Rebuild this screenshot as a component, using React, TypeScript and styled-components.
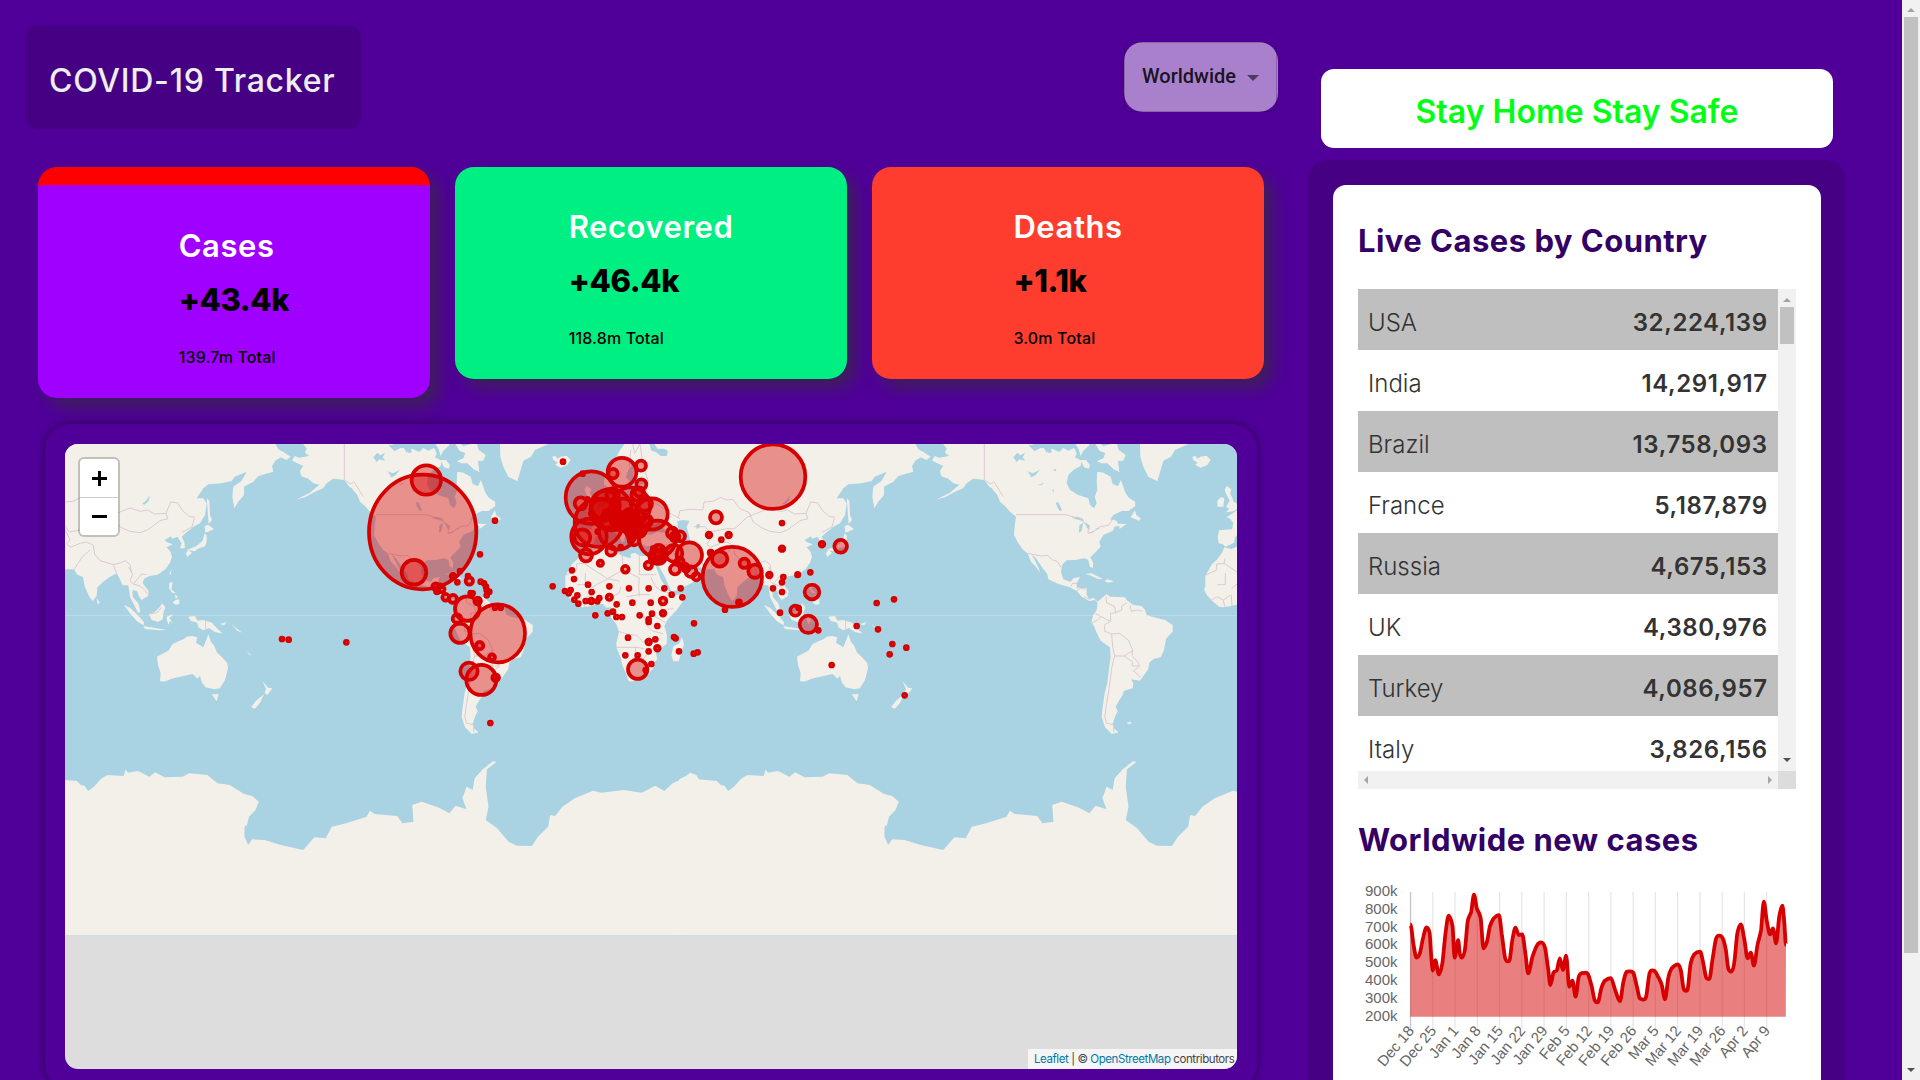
import React from "react";
import styled, { createGlobalStyle } from "styled-components";

const GlobalStyle = createGlobalStyle`
  * { box-sizing: border-box; }
  body {
    margin: 0;
    background: #500099;
    overflow: hidden;
    font-family: Inter, "Liberation Sans", sans-serif;
  }
  h1, h2, h3, p { margin: 0; }
`;

const Page = styled.div`
  display: flex;
  width: 1920px;
  height: 1080px;
  overflow: hidden;
  background: #500099;
`;

const Main = styled.main`
  width: 1308px;
  flex: none;
  padding: 25px 0 0 25px;
`;

const Header = styled.header`
  display: flex;
  justify-content: space-between;
  align-items: flex-start;
  width: 1253px;
  height: 142px;
`;

const Brand = styled.div`
  width: 336px;
  height: 104px;
  border-radius: 13px;
  background: #450084;
  padding: 35px 0 0 24px;
`;

const BrandName = styled.h1`
  font-size: 32px;
  line-height: 42px;
  font-weight: 500;
  letter-spacing: 0.75px;
  color: #eee;
  white-space: nowrap;
`;

const Select = styled.div`
  display: flex;
  margin-top: 17px;
  width: 154px;
  height: 70px;
  padding-right: 1px;
  border-radius: 19px;
  background: rgba(255, 255, 255, 0.5);
`;

const SelectOutline = styled.div`
  display: flex;
  align-items: center;
  justify-content: space-between;
  flex: 1;
  padding: 0 17px 3px 17px;
  border: 1px solid rgba(0, 0, 0, 0.2);
  border-radius: 5px;
  font: 500 20px Roboto, sans-serif;
  letter-spacing: 0;
  color: rgba(0, 0, 0, 0.87);
`;

const Caret = styled.span`
  margin-top: 5px;
  border: 6.5px solid transparent;
  border-top: 6.5px solid rgba(0, 0, 0, 0.54);
  border-bottom: 0;
`;

const Stats = styled.section`
  display: flex;
  align-items: flex-start;
  gap: 25px;
  height: 257px;
  padding-left: 13px;
`;

const StatCard = styled.article<{ $color: string; $active?: boolean }>`
  display: flex;
  justify-content: center;
  width: 392px;
  height: ${(p) => (p.$active ? 231 : 212)}px;
  padding-top: ${(p) => (p.$active ? 41 : 40)}px;
  border-radius: 19px;
  border-top: ${(p) => (p.$active ? "18.5px solid #ff0000" : "0")};
  background: ${(p) => p.$color};
  box-shadow: 9px 9px 16px rgba(50, 50, 50, 0.62);
`;

const StatBody = styled.div`
  white-space: nowrap;
`;

const StatTitle = styled.h2`
  font-size: 31px;
  line-height: 40px;
  font-weight: 600;
  letter-spacing: 0.55px;
  color: #fff;
`;

const StatValue = styled.h2`
  margin-top: 14px;
  font-size: 31px;
  line-height: 40px;
  font-weight: 800;
  letter-spacing: -0.4px;
  color: #000;
`;

const StatTotal = styled.p`
  margin-top: 26px;
  font-size: 16px;
  line-height: 22px;
  font-weight: 500;
  letter-spacing: 0.15px;
  color: #000;
`;

const MapCard = styled.section`
  margin-left: 20px;
  width: 1212px;
  height: 665px;
  padding: 20px;
  border-radius: 25px;
  background: #500099;
  box-shadow: 0 0 9px rgba(0, 0, 0, 0.5);
`;

const MapFrame = styled.div`
  position: relative;
  width: 1172px;
  height: 625px;
  overflow: hidden;
  border-radius: 13px;
  background: #ddd;

  svg { display: block; }
`;

const ZoomControl = styled.div`
  position: absolute;
  top: 13px;
  left: 13px;
  width: 42px;
  border: 2.5px solid rgba(0, 0, 0, 0.2);
  border-radius: 6px;
  background: #fff;
  background-clip: padding-box;
`;

const ZoomButton = styled.button`
  display: flex;
  align-items: center;
  justify-content: center;
  width: 100%;
  height: 38px;
  padding: 0;
  border: 0;
  background: transparent;

  & + & { border-top: 1px solid #ccc; }
`;

const Attribution = styled.div`
  position: absolute;
  right: 0;
  bottom: 0;
  width: 209px;
  height: 20px;
  padding-left: 6px;
  background: rgba(255, 255, 255, 0.7);
  font-size: 11.5px;
  line-height: 21px;
  letter-spacing: -0.42px;
  white-space: nowrap;
  color: #444;

  a { color: #0078a8; text-decoration: none; }
`;

const Aside = styled.aside`
  width: 594px;
  flex: none;
`;

const Slogan = styled.div`
  width: 512px;
  height: 79px;
  margin: 69px 0 12px 13px;
  border-radius: 13px;
  background: #fff;
  text-align: center;
  font-size: 32px;
  line-height: 86px;
  font-weight: 600;
  color: #00ff14;
  white-space: nowrap;
`;

const SidePanel = styled.div`
  width: 538px;
  height: 960px;
  padding: 25px;
  border-radius: 20px;
  background: #450084;
`;

const SideCard = styled.div`
  height: 930px;
  padding: 34px 25px 0;
  border-radius: 13px;
  background: #fff;
`;

const SideTitle = styled.h3`
  height: 44px;
  font-size: 31px;
  line-height: 44px;
  font-weight: 700;
  letter-spacing: 0.47px;
  color: #330066;
  white-space: nowrap;
`;

const TableFrame = styled.div`
  display: grid;
  grid-template-columns: 420px 18px;
  grid-template-rows: 482px 18px;
  margin: 26px 0 29px;
`;

const Rows = styled.div`
  overflow: hidden;
`;

const Row = styled.div`
  display: flex;
  align-items: center;
  justify-content: space-between;
  height: 61px;
  padding: 5px 11px 0 10px;
  font-size: 24px;
  font-weight: 300;
  color: #333;

  &:nth-child(odd) { background: #bfbfbf; }

  strong { font-weight: 600; letter-spacing: 0.6px; margin-right: -0.6px; }
`;

const Track = styled.div<{ $horizontal?: boolean }>`
  display: flex;
  flex-direction: ${(p) => (p.$horizontal ? "row" : "column")};
  align-items: center;
  justify-content: space-between;
  padding: ${(p) => (p.$horizontal ? "0 6px" : "9px 0")};
  background: #f1f1f1;
`;

const Thumb = styled.div<{ $length: number }>`
  width: 14px;
  height: ${(p) => p.$length}px;
  margin: 5px 0 auto;
  background: #c1c1c1;
`;

const Corner = styled.div`
  background: #dcdcdc;
`;

const Arrow = styled.span<{ $dir: "up" | "down" | "left" | "right"; $muted?: boolean }>`
  width: 0;
  height: 0;
  border: 4px solid transparent;
  border-${(p) => ({ up: "bottom", down: "top", left: "right", right: "left" })[p.$dir]}-color: ${(p) =>
    p.$muted ? "#a3a3a3" : "#505050"};
  border-${(p) => ({ up: "top", down: "bottom", left: "left", right: "right" })[p.$dir]}-width: 0;
`;

const PageScroll = styled(Track)`
  width: 18px;
  height: 1080px;
  flex: none;
  padding-top: 8px;
  padding-bottom: 8px;
`;

/* ---------- World map ---------- */

/* Outlines are kept in thirds of a pixel, each set around its own origin. */
const AMERICAS = [
  "-60,60 -40,85 -45,98 -32,108 -62,113 -76,108 -84,122 -50,138 -60,152 -57,168 -35,176 -20,190 -2,194 -30,218 -70,238 -45,232 -12,214 10,204 20,190 40,176 73,180 88,200 95,205 112,225 120,245 135,258 150,275 168,290 165,310 162,345 175,370 190,390 203,400 213,425 228,440 240,458 236,444 224,420 216,404 228,415 245,440 262,463 265,478 295,492 325,500 350,512 365,530 388,543 405,540 413,548 410,570 400,585 394,607 402,618 410,638 422,662 450,682 452,710 448,740 442,790 434,820 428,860 425,890 435,922 455,942 475,937 462,925 458,912 465,890 473,874 467,860 475,845 488,825 492,812 518,805 520,790 513,778 540,782 565,747 568,728 582,716 602,712 612,690 618,656 638,635 638,615 615,600 575,590 560,585 555,570 545,558 520,555 500,540 495,532 450,530 440,522 425,535 413,545 400,533 388,538 380,525 380,505 350,503 350,490 360,470 340,475 332,486 310,478 303,455 306,435 320,421 345,420 373,415 385,420 390,440 398,445 400,430 391,412 405,398 422,380 418,365 430,345 458,333 464,320 478,317 478,327 500,312 475,311 465,298 450,299 460,285 485,273 505,273 526,258 525,245 505,232 495,215 488,195 482,180 474,198 458,192 452,170 430,158 412,155 410,185 412,210 404,230 410,250 402,265 390,255 385,235 355,225 330,210 320,190 325,165 340,150 362,138 365,122 345,112 350,100 342,84 325,92 310,84 298,96 276,86 260,98 252,84 225,82 210,60",
  "400,60 430,78 470,68 476,90 497,105 490,122 474,124 478,156 460,147 442,130 425,130 410,124 430,115 436,100 418,92",
  "340,60 380,60 388,76 370,92 362,108 356,88",
  "540,60 541,110 550,140 565,170 592,184 602,150 610,122 633,110 645,90 690,70",
  "697,110 706,108 712,116 722,110 740,107 752,120 742,135 722,143 705,134 713,128 700,120",
  "362,120 378,120 390,136 386,146 372,142",
  "512,292 525,270 528,284 543,296 536,302 525,297",
  "375,462 395,460 430,478 412,476 390,466",
  "433,484 442,478 462,484 446,488",
  "500,909 510,905 516,909 506,913",
];

const AMERICAS_WATER = [
  "160,112 172,98 180,106 195,98 188,112 196,122 178,118 170,126",
  "203,154 218,160 240,150 226,166 214,172",
  "287,246 296,248 306,270 300,274 292,262",
  "334,293 352,290 368,296 372,304 356,300",
  "358,316 370,308 364,334 357,338",
  "374,305 390,318 388,330 380,322",
  "382,341 402,332 398,338",
  "402,328 418,323 416,328",
  "232,196 252,188 246,194",
  "205,76 222,74 250,80 236,86 224,94 214,84",
  "262,96 272,88 276,96 268,100",
  "278,150 290,146 286,154",
  "276,206 282,210 280,218",
];

const AMERICAS_BORDERS = [
  "73,60 73,180 92,192 102,186 130,230",
  "168,284 318,284 345,292 365,300 385,322 384,340 402,334 420,320 445,316 458,298 468,300",
  "203,400 222,404 245,408 262,406 278,420 292,424 303,442",
  "332,500 338,490 352,490 M350,512 362,505 378,508 M388,538 372,530",
  "438,530 440,548 464,560 467,578 452,580 452,604 434,614 434,634 455,642 478,640 505,660 518,690 516,706 536,730 538,740 520,752 542,772",
  "467,578 486,570 484,560 500,548 M510,556 514,574 532,570 546,574",
  "395,610 412,600 424,590 452,604 M404,580 424,590",
  "455,642 458,680 464,708 492,708 518,692 M464,708 456,740 448,800 440,850 434,890 440,910 460,914 462,938",
  "492,708 518,726 516,738 536,738",
];

const OLD_WORLD = [
  "262,30 240,60 225,90 200,118 192,135 192,164 208,174 221,161 228,178 232,194 240,200 250,190 262,165 268,152 257,142 266,118 277,103 290,90 300,92 298,98 281,118 280,138 284,154 300,156 325,154 310,162 294,166 290,178 280,184 272,207 250,208 229,212 216,204 218,178 208,186 210,212 198,220 186,230 172,240 156,251 141,261 152,268 160,279 156,298 117,301 113,320 116,340 128,342 136,350 150,344 162,338 165,323 180,305 202,298 216,298 228,312 242,326 245,338 254,332 252,324 264,323 248,308 236,294 236,284 252,298 266,309 272,328 282,344 292,338 286,322 309,316 302,330 306,342 318,348 338,348 357,347 354,362 349,379 346,380 330,379 298,377 285,368 272,372 272,385 250,379 232,370 222,366 222,352 218,343 192,344 170,350 154,357 133,352 126,368 112,388 96,402 86,420 76,438 76,470 72,478 80,494 94,510 117,530 128,532 154,528 176,522 189,522 199,533 213,532 218,545 213,562 229,583 237,605 229,640 230,655 242,682 247,706 259,732 264,751 272,755 298,749 320,738 340,714 341,700 352,688 348,670 360,656 380,642 381,616 373,588 384,567 410,540 428,515 437,491 400,495 394,489 382,478 373,465 362,447 352,420 338,390 346,384 350,396 356,408 372,436 384,462 395,485 420,478 442,466 469,452 484,432 474,422 464,412 454,424 440,424 432,406 421,388 428,388 440,402 454,408 469,406 493,418 522,418 532,434 549,441 554,469 568,500 578,513 590,498 592,472 610,455 629,441 650,430 658,444 668,466 685,466 690,500 704,528 714,548 721,546 716,522 698,500 698,480 712,484 716,498 725,510 744,498 746,484 728,460 732,446 748,438 773,434 796,418 810,398 816,381 812,366 800,352 818,343 800,336 794,330 813,319 816,326 832,320 845,340 840,355 855,355 853,335 845,320 858,308 880,290 900,280 915,255 920,220 910,205 890,205 910,175 925,163 965,160 995,153 1004,140 1040,125 1025,152 1000,170 997,200 1003,235 1015,215 1032,195 1032,170 1060,155 1075,138 1120,125 1116,108 1126,92 1142,82 1160,90 1172,80 1150,66 1135,58 1120,30",
  "138,247 160,244 170,238 173,223 160,214 157,203 150,190 154,178 140,168 134,180 140,195 149,212 138,230 148,236",
  "112,230 130,230 133,204 122,202 112,212",
  "426,621 432,643 416,694 400,694 394,676 400,649 418,640",
];

const OLD_WORLD_WATER = [
  "314,309 316,294 330,279 344,284 362,272 362,287 386,309 352,306 330,315",
  "412,274 428,270 448,272 440,292 446,312 453,343 429,340 426,316 414,294",
  "328,42 342,40 352,56 372,56 384,62 380,78 362,78 348,66 334,62",
  "468,284 480,282 478,294 470,296",
  "726,222 738,212 750,196 746,212 734,224",
  "540,262 560,258 548,264",
];

const OLD_WORLD_BORDERS = [
  "415,262 420,242 450,238 488,240 492,216 520,214 542,202 560,210 578,208 600,236 628,248 634,258 620,262 600,282 584,296 560,296 530,302 508,306 496,290 462,290",
  "634,256 660,246 690,234 722,244 742,240 764,252 798,250 804,266 780,272 764,284 742,300 720,308 690,304 666,294 640,276 628,250",
  "798,250 812,216 832,218 848,242 866,258 884,262 876,290 860,300 846,306",
  "496,300 510,330 500,342 512,352 540,340 560,336 580,346 584,372 600,392 640,404 662,398 676,392 690,404 694,428",
  "493,418 486,394 476,360 M522,418 534,400 548,380 570,360 M640,404 650,430",
  "686,412 698,432 690,452 700,462 712,448 724,432 740,434 M700,462 720,468 732,478 742,490",
  "135,385 132,400 110,402 110,420 76,436 M132,400 202,446 250,420 246,372 M298,378 298,434 348,434",
  "202,446 240,454 M250,420 298,444 296,470 M136,430 136,464 112,464 M155,474 172,462 202,448",
  "206,520 216,500 238,490 242,470 M260,500 300,494 330,494 M296,470 298,498 M332,440 346,470 366,484 396,490",
  "234,604 262,612 290,616 310,636 332,618 M228,652 290,652 312,656 M288,652 282,690 308,688 326,668",
  "310,556 320,586 336,602 370,612 M340,556 376,578 M354,500 366,540 400,536",
  "130,510 134,530 M154,494 156,528 M176,496 178,522 M94,510 112,500 130,510 150,496",
  "248,249 272,252 300,240 325,232 M272,60 268,110 M300,42 310,110 325,154 M325,154 318,186 340,214 390,250 420,266",
  "300,42 284,70 278,42",
  "357,347 390,344 410,348 M400,370 422,386 M410,348 414,330",
];

const PACIFIC = [
  "438,400 444,390 456,398 442,411",
  "440,390 470,378 488,362 494,340 500,346 500,366 494,380 478,384 464,394",
  "494,318 504,314 522,327 508,334 496,338",
  "500,235 508,242 510,285 516,300 506,312 503,272",
  "388,462 395,446 392,464",
  "388,488 398,486 394,508 408,520 396,518 387,504",
  "398,548 406,540 418,538 418,552 408,554",
  "404,524 414,530 408,536",
  "327,582 345,576 360,560 366,550 376,562 370,578 368,598 355,606 335,600",
  "252,555 270,563 292,584 312,606 310,616 290,603 270,580",
  "310,618 345,624 380,630 360,631 315,627",
  "380,590 402,582 388,594 400,612 390,602 386,614 381,602",
  "445,590 465,588 472,602 490,600 516,608 530,624 548,641 525,636 507,624 490,631 475,622 472,608 452,602",
  "351,710 385,692 398,672 415,664 430,658 440,650 456,648 472,652 468,668 490,682 498,662 505,643 512,664 523,678 530,696 546,712 562,730 564,745 555,780 540,805 522,808 497,802 486,788 480,768 472,776 458,762 430,768 395,776 372,785 360,783 362,760 354,735",
  "515,823 536,822 530,844",
  "668,785 678,795 684,803 697,805 682,825 674,820 678,806",
  "672,823 660,848 645,866 633,862 648,842",
  "170,535 180,548 173,553",
  "540,612 560,606 552,616",
  "574,612 606,638 592,632",
  "620,694 634,706 628,704",
];

const ANTARCTICA =
  "-2,178 14,168 25,158 40,165 46,178 90,183 100,195 110,198 118,213 132,200 150,176 165,165 205,168 210,148 215,158 240,153 268,170 282,157 305,172 350,170 365,160 410,165 435,190 465,195 500,222 520,228 536,245 528,270 512,290 507,315 501,320 501,350 510,375 520,358 550,360 590,375 645,390 672,352 700,355 715,320 750,310 800,290 808,272 820,282 875,288 888,310 915,305 912,255 935,245 975,262 1003,280 1018,257 1045,268 1035,235 1045,200 1060,210 1065,175 1085,148 1110,124 1118,126 1095,148 1092,200 1099,260 1092,300 1120,325 1148,365 1168,377 1205,378 1220,350 1245,320 1250,285 1262,288 1280,260 1310,235 1355,212 1375,218 1430,210 1475,218 1507,197 1530,213 1550,190 1572,178 1572,646 -2,646";

type Marker = [number, number, number?, number?];

const AMERICA_MARKERS: Marker[] = [
  [248, 306, 161, 172], [473, 610, 82, 87], [259, 150, 44], [222, 427, 37], [424, 750, 45], [387, 724, 26],
  [360, 610, 29], [382, 536, 37], [351, 566, 13], [419, 647, 11], [456, 682, 9], [467, 743, 10], [413, 513, 10],
  [465, 533], [482, 533], [339, 507, 12], [317, 502, 10], [287, 470, 10], [291, 484, 6], [305, 478, 9],
  [339, 439, 7], [360, 423], [352, 457], [388, 453, 11], [384, 438], [422, 455], [432, 460], [438, 470],
  [440, 480], [448, 485], [440, 496], [398, 490], [392, 489], [465, 272], [420, 373], [451, 879], [19, 637],
  [-174, 627], [-154, 629], [638, 469], [300, 468, 5],
];

const WORLD_MARKERS: Marker[] = [
  [69, 95], [154, 203, 77, 79], [246, 127, 43], [219, 131, 14], [303, 107, 15], [128, 131], [122, 220, 18],
  [304, 163, 15], [298, 186, 14], [293, 194, 19], [147, 320, 53], [127, 322, 24], [176, 279, 72], [213, 239, 62],
  [233, 303, 56], [272, 230, 58], [336, 252, 47], [352, 327, 55], [248, 249, 43], [196, 226, 43], [186, 240, 34],
  [208, 272, 26], [236, 269, 25], [272, 272, 28], [298, 279, 32], [277, 294, 25], [298, 302, 19], [269, 257, 20],
  [282, 330, 16], [248, 286, 17], [245, 279, 15], [261, 294, 13], [272, 316, 11], [282, 310, 11], [320, 272, 16],
  [314, 221, 22], [218, 194, 19], [268, 306, 9], [277, 305, 10], [341, 357, 6], [350, 379, 22], [353, 376, 14],
  [356, 364, 19], [357, 382, 20], [368, 362, 6], [402, 370, 25], [448, 375, 38], [397, 309, 16], [405, 321, 13],
  [420, 319, 15], [419, 395, 12], [405, 418, 15], [434, 410, 10], [438, 415, 10], [453, 425, 16], [469, 440, 11],
  [325, 406, 11], [138, 376, 18], [181, 400, 8], [213, 363, 14], [256, 418, 10], [242, 351], [173, 305], [198, 249, 8],
  [204, 296], [216, 270], [231, 295], [154, 251], [142, 208], [137, 345],
  [539, 387, 23], [512, 368, 6], [577, 441, 89, 90], [613, 400, 14], [645, 424, 20], [597, 517, 6], [555, 539],
  [528, 262, 18], [507, 315, 7], [566, 315, 7], [544, 329], [726, 356, 7], [726, 279], [846, 343, 7],
  [699, 140, 97], [688, 435, 7], [730, 441], [699, 475], [726, 457], [726, 486], [773, 434, 5], [811, 427],
  [816, 486, 22], [766, 542, 15], [776, 534], [805, 583, 26], [835, 601], [720, 548], [875, 705], [902, 349, 19],
  [950, 588], [1014, 598], [1057, 642], [1099, 653], [1049, 673], [1010, 519], [1062, 508], [1094, 796],
  [96, 421], [102, 447], [144, 464], [208, 469], [267, 475], [326, 475], [373, 475], [422, 475], [395, 494],
  [427, 502], [75, 483], [92, 480], [86, 490], [112, 496], [103, 509], [115, 521], [137, 513], [154, 513, 7],
  [155, 486], [172, 514], [178, 504], [208, 502, 8], [230, 523], [277, 518], [332, 518], [369, 513, 10],
  [369, 550, 7], [336, 551], [299, 556], [166, 556], [203, 550], [219, 545], [229, 561], [246, 561], [326, 568],
  [326, 576], [352, 588], [462, 580], [264, 623], [326, 636, 7], [346, 628], [352, 655, 7], [326, 664],
  [402, 621], [407, 625], [417, 664], [461, 671], [473, 667], [256, 676], [293, 676], [334, 702], [317, 720],
  [293, 718, 29],
];

const Shapes = ({ list, fill }: { list: string[]; fill: string }) => (
  <>
    {list.map((points) => (
      <polygon key={points} points={points} fill={fill} />
    ))}
  </>
);

const Borders = ({ list }: { list: string[] }) => (
  <path d={list.map((l) => "M" + l).join(" ")} fill="none" stroke="#d9c6d1" strokeWidth="2.8" />
);

const Markers = ({ list }: { list: Marker[] }) => (
  <g fill="#d60000" fillOpacity="0.4" stroke="#d60000" strokeWidth="11.25">
    {list.map(([x, y, rx = 4.4, ry = rx], i) => (
      <ellipse key={i} cx={x} cy={y} rx={rx} ry={ry} />
    ))}
  </g>
);

const LAND = "#f3f0e9";
const WATER = "#a9d3e2";

const WorldMap = () => (
  <svg width="1172" height="625" viewBox="65 444 1172 625">
    <rect x="65" y="444" width="1172" height="491.5" fill={WATER} />
    <defs>
      <g id="world">
        <g transform="translate(320 420) scale(0.33333)">
          <Shapes list={AMERICAS} fill={LAND} />
          <Shapes list={AMERICAS_WATER} fill={WATER} />
          <Borders list={AMERICAS_BORDERS} />
        </g>
        <g transform="translate(540 430) scale(0.33333)">
          <Shapes list={OLD_WORLD} fill={LAND} />
          <Shapes list={OLD_WORLD_WATER} fill={WATER} />
          <Borders list={OLD_WORLD_BORDERS} />
        </g>
        <g transform="translate(680 420) scale(0.33333)">
          <Shapes list={PACIFIC} fill={LAND} />
          <Borders list={["497,600 497,630", "330,582 352,578 364,562"]} />
        </g>
        <g transform="translate(40 720) scale(0.40816 0.33333)">
          <polygon points={ANTARCTICA} fill={LAND} />
        </g>
      </g>
    </defs>
    <use href="#world" x="-640" />
    <use href="#world" />
    <use href="#world" x="640" />
    <rect x="65" y="615" width="1172" height="1" fill="#fff" fillOpacity="0.2" />
    <g transform="translate(340 430) scale(0.33333)">
      <Markers list={AMERICA_MARKERS} />
    </g>
    <g transform="translate(540 430) scale(0.33333)">
      <Markers list={WORLD_MARKERS} />
    </g>
  </svg>
);

/* ---------- Line chart ---------- */

const SERIES =
  "279,403 288,470 295,503 303,490 312,440 320,412 328,430 332,500 336,542 342,510 351,553 360,520 368,430 376,377 386,410 391,503 400,450 404,490 409,503 417,480 424,395 433,365 440,314 447,355 457,385 464,475 473,455 480,410 489,386 503,375 510,430 519,505 529,513 537,450 545,413 553,435 562,433 570,490 577,550 588,500 600,465 610,457 620,475 628,540 633,585 641,548 650,540 657,505 665,540 673,497 681,590 689,572 697,620 705,560 717,549 728,552 738,590 745,630 753,637 762,595 770,573 786,564 797,600 809,634 818,575 827,545 843,548 852,590 860,626 875,622 884,550 895,542 908,565 915,585 923,628 932,560 940,535 955,523 963,540 970,595 979,602 988,520 997,493 1012,485 1020,520 1027,562 1035,567 1043,510 1052,447 1061,437 1070,447 1077,480 1083,535 1091,545 1098,520 1106,430 1115,403 1124,450 1132,505 1140,488 1148,527 1157,465 1166,420 1173,335 1180,390 1189,433 1196,415 1204,460 1212,380 1220,347 1225,400 1229,465"
    .split(" ")
    .map((pair) => {
      const [x, y] = pair.split(",").map(Number);
      return [x / 2.529, y / 3 - 90] as const;
    });

const curve = SERIES.reduce((d, [x, y], i) => {
  if (i === 0) return `M${x},${y}`;
  const [px, py] = SERIES[i - 1];
  const before = SERIES[i - 2] ?? SERIES[i - 1];
  const after = SERIES[i + 1] ?? SERIES[i];
  const slopeIn = (y - py) * (py - before[1]) > 0 ? (y - before[1]) / 6 : 0;
  const slopeOut = (after[1] - y) * (y - py) > 0 ? (after[1] - py) / 6 : 0;
  return `${d}C${px + (x - px) / 3},${py + slopeIn} ${x - (x - px) / 3},${y - slopeOut} ${x},${y}`;
}, "");

const WEEKS = [
  "Dec 18", "Dec 25", "Jan 1", "Jan 8", "Jan 15", "Jan 22", "Jan 29", "Feb 5", "Feb 12",
  "Feb 19", "Feb 26", "Mar 5", "Mar 12", "Mar 19", "Mar 26", "Apr 2", "Apr 9",
];

const ChartArea = styled.div`
  margin: 10px 0 0 -58px;

  svg { display: block; }
  text { font: 15px "Liberation Sans", Arial, sans-serif; fill: #666; }
`;

const Chart = () => (
  <ChartArea>
    <svg width="500" height="210" viewBox="0 -8 500 210">
      {WEEKS.map((label, i) => {
        const x = 110.5 + i * 22.26;
        return (
          <g key={label}>
            <rect x={x - 0.6} y="12" width="1.25" height="137" fill={i ? "#e6e6e6" : "#c4c4c4"} />
            <text x={x + 0.5} y={153} textAnchor="end" fontSize="15.5" transform={`rotate(-50 ${x + 0.5} 148)`}>
              {label}
            </text>
          </g>
        );
      })}
      {[900, 800, 700, 600, 500, 400, 300, 200].map((v, i) => (
        <text key={v} x="97.5" y={16 + i * 17.8} textAnchor="end">
          {v}k
        </text>
      ))}
      <path d={`${curve}L485.8,136.7L110.3,136.7Z`} fill="#d60000" fillOpacity="0.5" />
      <path d={curve} fill="none" stroke="#d60000" strokeWidth="3.75" strokeLinejoin="round" />
    </svg>
  </ChartArea>
);

const COUNTRIES = [
  ["USA", "32,224,139"],
  ["India", "14,291,917"],
  ["Brazil", "13,758,093"],
  ["France", "5,187,879"],
  ["Russia", "4,675,153"],
  ["UK", "4,380,976"],
  ["Turkey", "4,086,957"],
  ["Italy", "3,826,156"],
];

const STATS = [
  { title: "Cases", value: "+43.4k", total: "139.7m Total", color: "#a000ff", active: true },
  { title: "Recovered", value: "+46.4k", total: "118.8m Total", color: "#00ef82" },
  { title: "Deaths", value: "+1.1k", total: "3.0m Total", color: "#ff3d2e" },
];

export default function App() {
  return (
    <Page>
      <GlobalStyle />
      <Main>
        <Header>
          <Brand>
            <BrandName>COVID-19 Tracker</BrandName>
          </Brand>
          <Select>
            <SelectOutline>
              Worldwide
              <Caret />
            </SelectOutline>
          </Select>
        </Header>
        <Stats>
          {STATS.map((s) => (
            <StatCard key={s.title} $color={s.color} $active={s.active}>
              <StatBody>
                <StatTitle>{s.title}</StatTitle>
                <StatValue>{s.value}</StatValue>
                <StatTotal>{s.total}</StatTotal>
              </StatBody>
            </StatCard>
          ))}
        </Stats>
        <MapCard>
          <MapFrame>
            <WorldMap />
            <ZoomControl>
              <ZoomButton aria-label="Zoom in">
                <svg width="15" height="15" viewBox="0 0 15 15">
                  <path d="M0 7.5H15M7.5 0V15" stroke="#000" strokeWidth="3" />
                </svg>
              </ZoomButton>
              <ZoomButton aria-label="Zoom out">
                <svg width="15" height="15" viewBox="0 0 15 15">
                  <path d="M0 7.5H15" stroke="#000" strokeWidth="3" />
                </svg>
              </ZoomButton>
            </ZoomControl>
            <Attribution>
              <a>Leaflet</a> | © <a>OpenStreetMap</a> contributors
            </Attribution>
          </MapFrame>
        </MapCard>
      </Main>
      <Aside>
        <Slogan>Stay Home Stay Safe</Slogan>
        <SidePanel>
          <SideCard>
            <SideTitle>Live Cases by Country</SideTitle>
            <TableFrame>
              <Rows>
                {COUNTRIES.map(([name, cases]) => (
                  <Row key={name}>
                    {name}
                    <strong>{cases}</strong>
                  </Row>
                ))}
              </Rows>
              <Track>
                <Arrow $dir="up" $muted />
                <Thumb $length={37} />
                <Arrow $dir="down" />
              </Track>
              <Track $horizontal>
                <Arrow $dir="left" $muted />
                <Arrow $dir="right" $muted />
              </Track>
              <Corner />
            </TableFrame>
            <SideTitle>Worldwide new cases</SideTitle>
            <Chart />
          </SideCard>
        </SidePanel>
      </Aside>
      <PageScroll>
        <Arrow $dir="up" $muted />
        <Thumb $length={936} />
        <Arrow $dir="down" />
      </PageScroll>
    </Page>
  );
}
